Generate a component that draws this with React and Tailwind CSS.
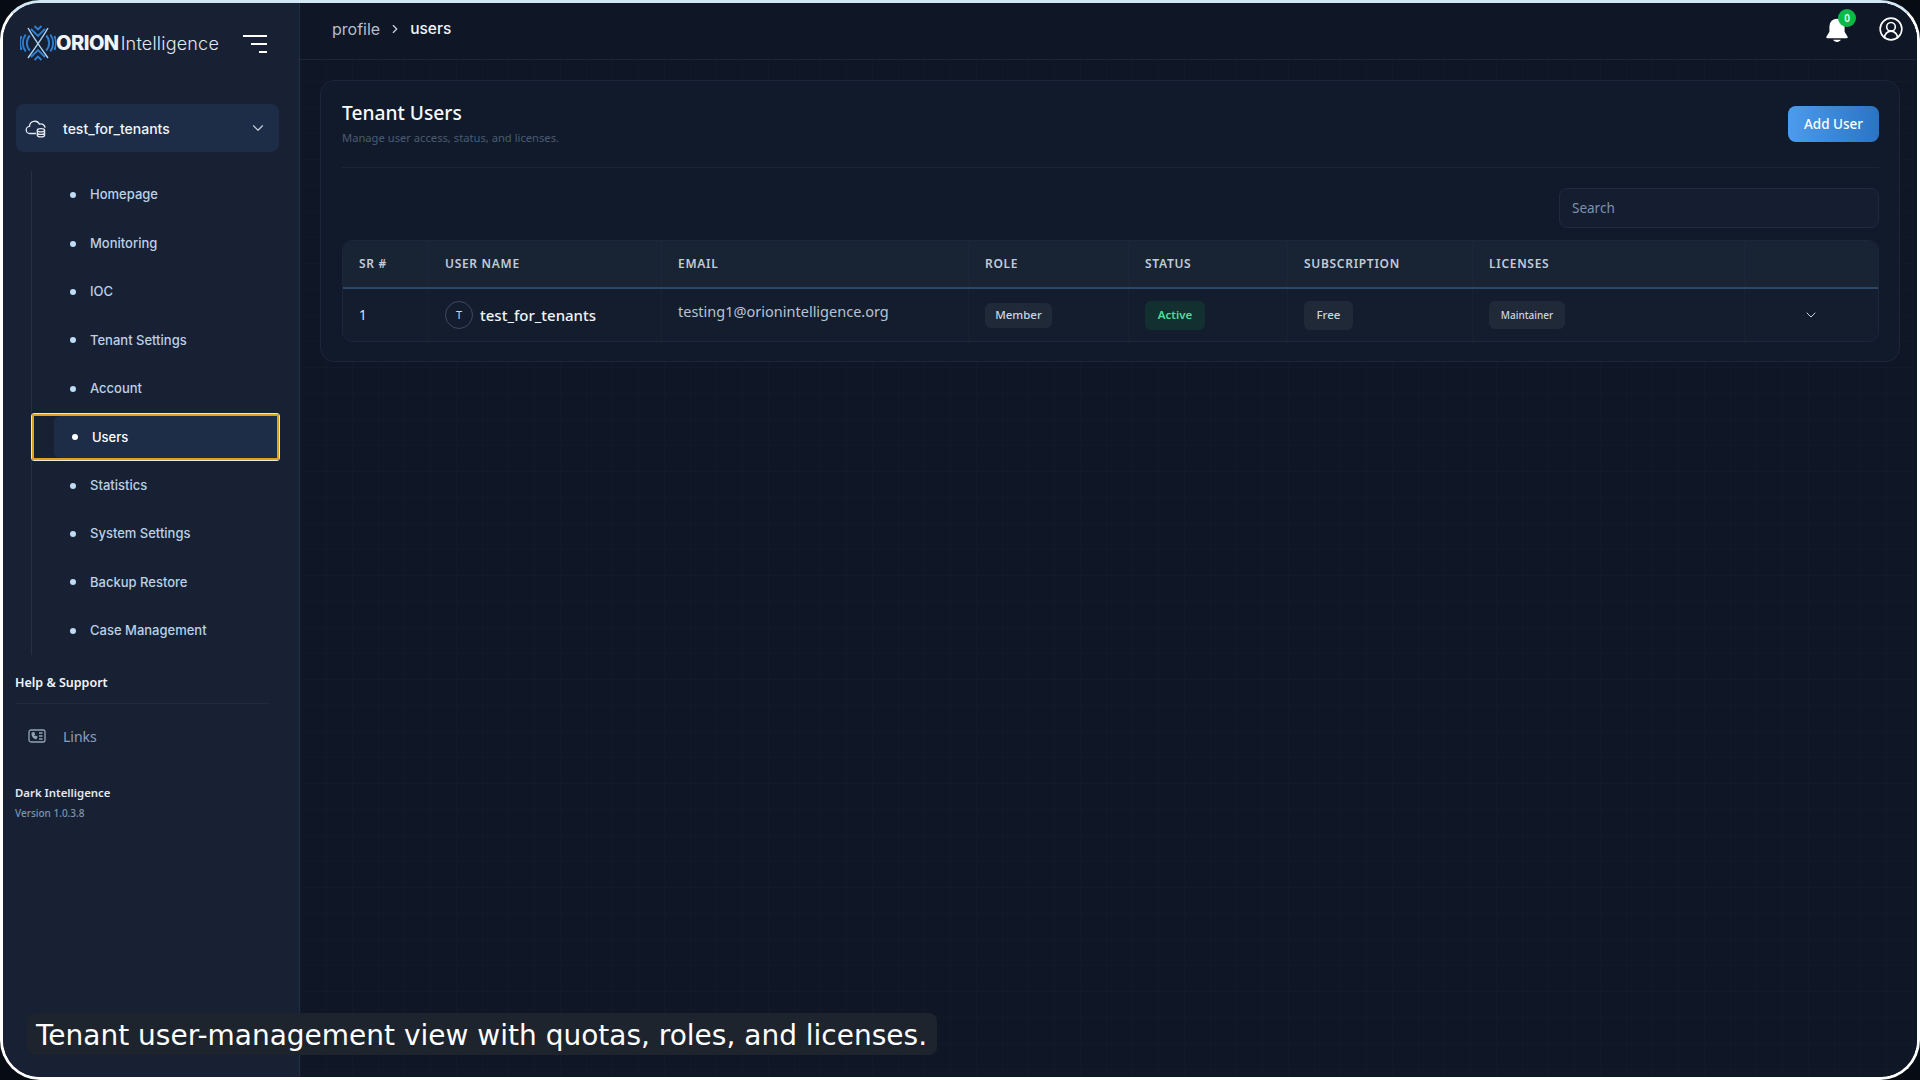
import React from 'react';
import { ChevronDown, ChevronRight, CircleUserRound } from 'lucide-react';

const navItems = ['Homepage', 'Monitoring', 'IOC', 'Tenant Settings', 'Account', 'Users', 'Statistics', 'System Settings', 'Backup Restore', 'Case Management'];

function Logo() {
  return (
    <svg width="36" height="36" viewBox="0 0 36 36" fill="none">
      <g stroke="#2f7fd0" strokeWidth="1.900">
        <path d="M1.500 11a18 18 0 0 0 0 14" />
        <path d="M5.700 9.500a14 14 0 0 0 0 17" />
        <path d="M9.800 10.500a11 11 0 0 0 0 15" />
        <path d="M34.500 11a18 18 0 0 1 0 14" />
        <path d="M30.300 9.500a14 14 0 0 1 0 17" />
        <path d="M26.200 10.500a11 11 0 0 1 0 15" />
        <path d="M14.500 1l3.500 3.500L21.500 1" />
        <path d="M11 4l7 7 7-7" />
        <path d="M14.500 35l3.500-3.500L21.500 35" />
        <path d="M11 32l7-7 7 7" />
      </g>
      <path d="M8 3c4 7 15 23 20 30M28 3C24 10 13 26 8 33" stroke="#a9d3f5" strokeWidth="1.500" />
    </svg>
  );
}

function CloudIcon() {
  return (
    <svg width="22" height="22" viewBox="0 0 20 20" fill="none" stroke="#e2e8f0" strokeWidth="1.200">
      <path d="M10 15H4.500a3.200 3.200 0 0 1-.4-6.400A4.800 4.800 0 0 1 13.200 6.600a3.600 3.600 0 0 1 5 3.200" />
      <ellipse cx="14.500" cy="12" rx="3.300" ry="1.500" />
      <path d="M11.200 12v4.500c0 .9 1.500 1.500 3.300 1.500s3.300-.6 3.300-1.500V12M11.200 14.300c0 .9 1.500 1.500 3.300 1.500s3.300-.6 3.300-1.500" />
    </svg>
  );
}

function LinksIcon() {
  return (
    <svg width="18" height="14" viewBox="0 0 18 14" fill="none" stroke="#94a3b8" strokeWidth="1.300">
      <rect x="1" y="1" width="16" height="12" rx="2" />
      <path d="M4.200 4c-.4 2.600 1.200 5 3.800 5.600l.9-1.500-1.600-.9-.7.6c-.6-.4-1-1-1.100-1.800l.8-.5-.4-1.700z" fill="#94a3b8" />
      <path d="M11 4h3.500M11 7h3.500M11 10h3.500" />
    </svg>
  );
}

function BellIcon() {
  return (
    <svg width="24" height="26" viewBox="0 0 22 24" fill="#ffffff">
      <path d="M11 1.500a7 7 0 0 0-7 7v5.200L1.200 18.200c-.4.700 0 1.300.8 1.300h18c.8 0 1.200-.6.8-1.300L18 13.700V8.500a7 7 0 0 0-7-7z" />
      <path d="M7.500 21h7c-.5 1.300-2 2-3.500 2s-3-.7-3.500-2z" />
    </svg>
  );
}

function Badge({ className, children }) {
  return <span className={`inline-flex items-center justify-center rounded-md ${className}`}>{children}</span>;
}

const columns = ['SR #', 'USER NAME', 'EMAIL', 'ROLE', 'STATUS', 'SUBSCRIPTION', 'LICENSES', ''];
const gridCols = 'grid grid-cols-[86px_233px_307px_160px_159px_185px_272px_1fr]';

export default function App() {
  return (
    <div className="h-[1080px] w-[1920px] overflow-hidden bg-[#060b14]">
      <div className="relative flex h-[1080px] w-[1920px] overflow-hidden rounded-[40px] border-[3px] border-white border-t-[#d3e6f3] bg-[#0f1626] font-['Noto_Sans',sans-serif]">
        {/* Sidebar */}
        <aside className="flex w-[297px] shrink-0 flex-col border-r border-[#222e42] bg-[#172133]">
          <div className="flex h-[83px] items-center justify-between pb-[3px] pl-[17px] pr-[32px]">
            <div className="flex items-center">
              <Logo />
              <span className="font-['Inter',sans-serif] text-[20px] font-extrabold tracking-[-0.5px] text-[#f1f5f9]">ORION</span>
              <span className="ml-[2px] font-['Inter',sans-serif] text-[18px] font-light tracking-[0.2px] text-[#e2e8f0]">Intelligence</span>
            </div>
            <div className="mt-[2px] flex flex-col items-end gap-[6px]">
              <div className="h-[2px] w-[24px] bg-white" />
              <div className="h-[2px] w-[16px] bg-white" />
              <div className="h-[2px] w-[8px] bg-white" />
            </div>
          </div>

          <div className="ml-[13px] mt-[18px] flex h-[48px] w-[263px] items-center rounded-lg bg-[#1e2d47] pl-[9px] pr-[12px]">
            <CloudIcon />
            <span className="ml-[16px] flex-1 font-['Inter',sans-serif] text-[14px] font-medium text-[#f1f5f9]">test_for_tenants</span>
            <ChevronDown size={18} strokeWidth={1.500} className="text-[#cbd5e1]" />
          </div>

          <nav className="ml-[28px] mt-[19px] flex w-[248px] flex-col border-l border-[#243147] font-['Inter',sans-serif] text-[13px] font-medium">
            {navItems.map((label) =>
              label === 'Users' ? (
                <div key={label} className="h-[48.400px] py-px">
                  <div className="flex h-[46px] rounded-[2px] border-2 border-[#e0a21b] outline outline-1 outline-[#e5e7eb]">
                    <div className="ml-[20px] flex flex-1 items-center rounded-l-md bg-[#1e2d47] pl-[18px] pt-[1px]">
                      <span className="h-[6px] w-[6px] rounded-full bg-white" />
                      <span className="ml-[14px] text-white">{label}</span>
                    </div>
                  </div>
                </div>
              ) : (
                <div key={label} className="flex h-[48.400px] items-center pl-[38px] text-[#bcd0e6]">
                  <span className="h-[6px] w-[6px] rounded-full bg-[#bfdbf5]" />
                  <span className="ml-[14px]">{label}</span>
                </div>
              ),
            )}
          </nav>

          <div className="ml-[12px] mt-[19px] w-[255px] border-b border-[#1f2a3d] pb-[10px] text-[12.500px] font-semibold text-[#f1f5f9]">Help &amp; Support</div>
          <div className="ml-[25px] mt-[22px] flex items-center">
            <LinksIcon />
            <span className="ml-[17px] text-[14px] text-[#8ba0bd]">Links</span>
          </div>
          <div className="ml-[12px] mt-[37px] text-[11.400px] font-semibold text-[#e2e8f0]">Dark Intelligence</div>
          <div className="ml-[12px] mt-[5px] text-[10px] font-medium text-[#7d93b2]">Version 1.0.3.8</div>
        </aside>

        {/* Main */}
        <main className="flex-1 bg-[#0f1626] bg-[linear-gradient(to_right,#121a2a_1px,transparent_1px),linear-gradient(to_bottom,#121a2a_1px,transparent_1px)] bg-[size:26px_26px]">
          <header className="flex h-[57px] items-center justify-between border-b border-[#1b2536] bg-[#0f1626] pl-[32px] pr-[13px]">
            <div className="flex items-center pb-[4px] font-['Inter',sans-serif] text-[16px]">
              <span className="text-[#b4bfcc]">profile</span>
              <ChevronRight size={14} strokeWidth={2} className="mx-[8px] text-[#cbd5e1]" />
              <span className="text-[15.500px] font-medium text-[#f1f5f9]">users</span>
            </div>
            <div className="flex items-center gap-[29px] pb-[4px]">
              <div className="relative mt-[2px]">
                <BellIcon />
                <span className="absolute -right-[7px] -top-[8px] flex h-[18px] w-[18px] items-center justify-center rounded-full bg-[#0cb848] text-[10px] font-semibold text-[#e8fff0]">0</span>
              </div>
              <CircleUserRound size={26} strokeWidth={1.500} className="text-white" />
            </div>
          </header>

          <section className="ml-[20px] mt-[20px] h-[282px] w-[1580px] rounded-[14px] border border-[#1c2638] bg-[#111a2b] pl-[21px] pr-[20px]">
            <div className="flex h-[87px] items-start justify-between border-b border-[#1a2435]">
              <div className="pt-[20px]">
                <h1 className="text-[19.200px] font-medium leading-[24px] text-[#f8fafc]">Tenant Users</h1>
                <p className="mt-[6px] text-[11.200px] leading-[14px] text-[#4b5a70]">Manage user access, status, and licenses.</p>
              </div>
              <button className="mt-[25px] h-[36px] w-[91px] rounded-lg bg-gradient-to-r from-[#4c9bec] to-[#2b74c4] text-[13.500px] font-medium text-white">Add User</button>
            </div>

            <div className="flex justify-end pt-[20px]">
              <div className="flex h-[40px] w-[320px] items-center rounded-lg border border-[#1f2a3d] bg-[#141e30] pl-[12px] text-[13.500px] text-[#7f91aa]">Search</div>
            </div>

            <div className="mt-[12px] overflow-hidden rounded-[10px] border border-[#1c2739] bg-[#131d2e]">
              <div className={`${gridCols} h-[48px] border-b-2 border-[#2c4767] bg-[#182334] text-[12px] font-semibold tracking-[0.7px] text-[#c0ccda]`}>
                {columns.map((c, i) => (
                  <div key={i} className={`flex items-center pl-[16px] ${i < 7 ? 'border-r border-[#1b2638]' : ''}`}>{c}</div>
                ))}
              </div>
              <div className={`${gridCols} h-[52px]`}>
                <div className="flex items-center border-r border-[#18222f] pl-[16px] text-[13.500px] text-[#dbe3ec]">1</div>
                <div className="flex items-center border-r border-[#18222f] pl-[16px]">
                  <div className="flex h-[28px] w-[28px] items-center justify-center rounded-full border border-[#3e4a5c] text-[11px] text-[#cbd5e1]">T</div>
                  <span className="ml-[7px] text-[15px] font-medium text-[#f1f5f9]">test_for_tenants</span>
                </div>
                <div className="flex items-center border-r border-[#18222f] pb-[7px] pl-[16px] text-[14.500px] text-[#b7c3d1]">testing1@orionintelligence.org</div>
                <div className="flex items-center border-r border-[#18222f] pl-[16px]"><Badge className="h-[25px] w-[67px] bg-[#1f2937] text-[11.500px] font-medium text-[#cbd5e1]">Member</Badge></div>
                <div className="flex items-center border-r border-[#18222f] pl-[16px]"><Badge className="h-[29px] w-[60px] bg-[#12302f] text-[11.500px] font-semibold text-[#4fdd9a]">Active</Badge></div>
                <div className="flex items-center border-r border-[#18222f] pl-[16px]"><Badge className="h-[29px] w-[49px] bg-[#1f2937] text-[11.500px] font-medium text-[#cbd5e1]">Free</Badge></div>
                <div className="flex items-center border-r border-[#18222f] pl-[16px]"><Badge className="h-[28px] w-[76px] bg-[#1f2937] text-[10px] font-medium text-[#cbd5e1]">Maintainer</Badge></div>
                <div className="flex items-center pl-[58px]"><ChevronDown size={16} strokeWidth={1.500} className="text-[#cbd5e1]" /></div>
              </div>
            </div>
          </section>
        </main>

        <div className="absolute bottom-[22px] left-[24px] flex h-[42px] w-[910px] items-center rounded-lg bg-[#1d242e] pl-[9px] pt-[3px] font-['DejaVu_Sans',sans-serif] text-[28px] text-white">
          Tenant user-management view with quotas, roles, and licenses.
        </div>
      </div>
    </div>
  );
}
